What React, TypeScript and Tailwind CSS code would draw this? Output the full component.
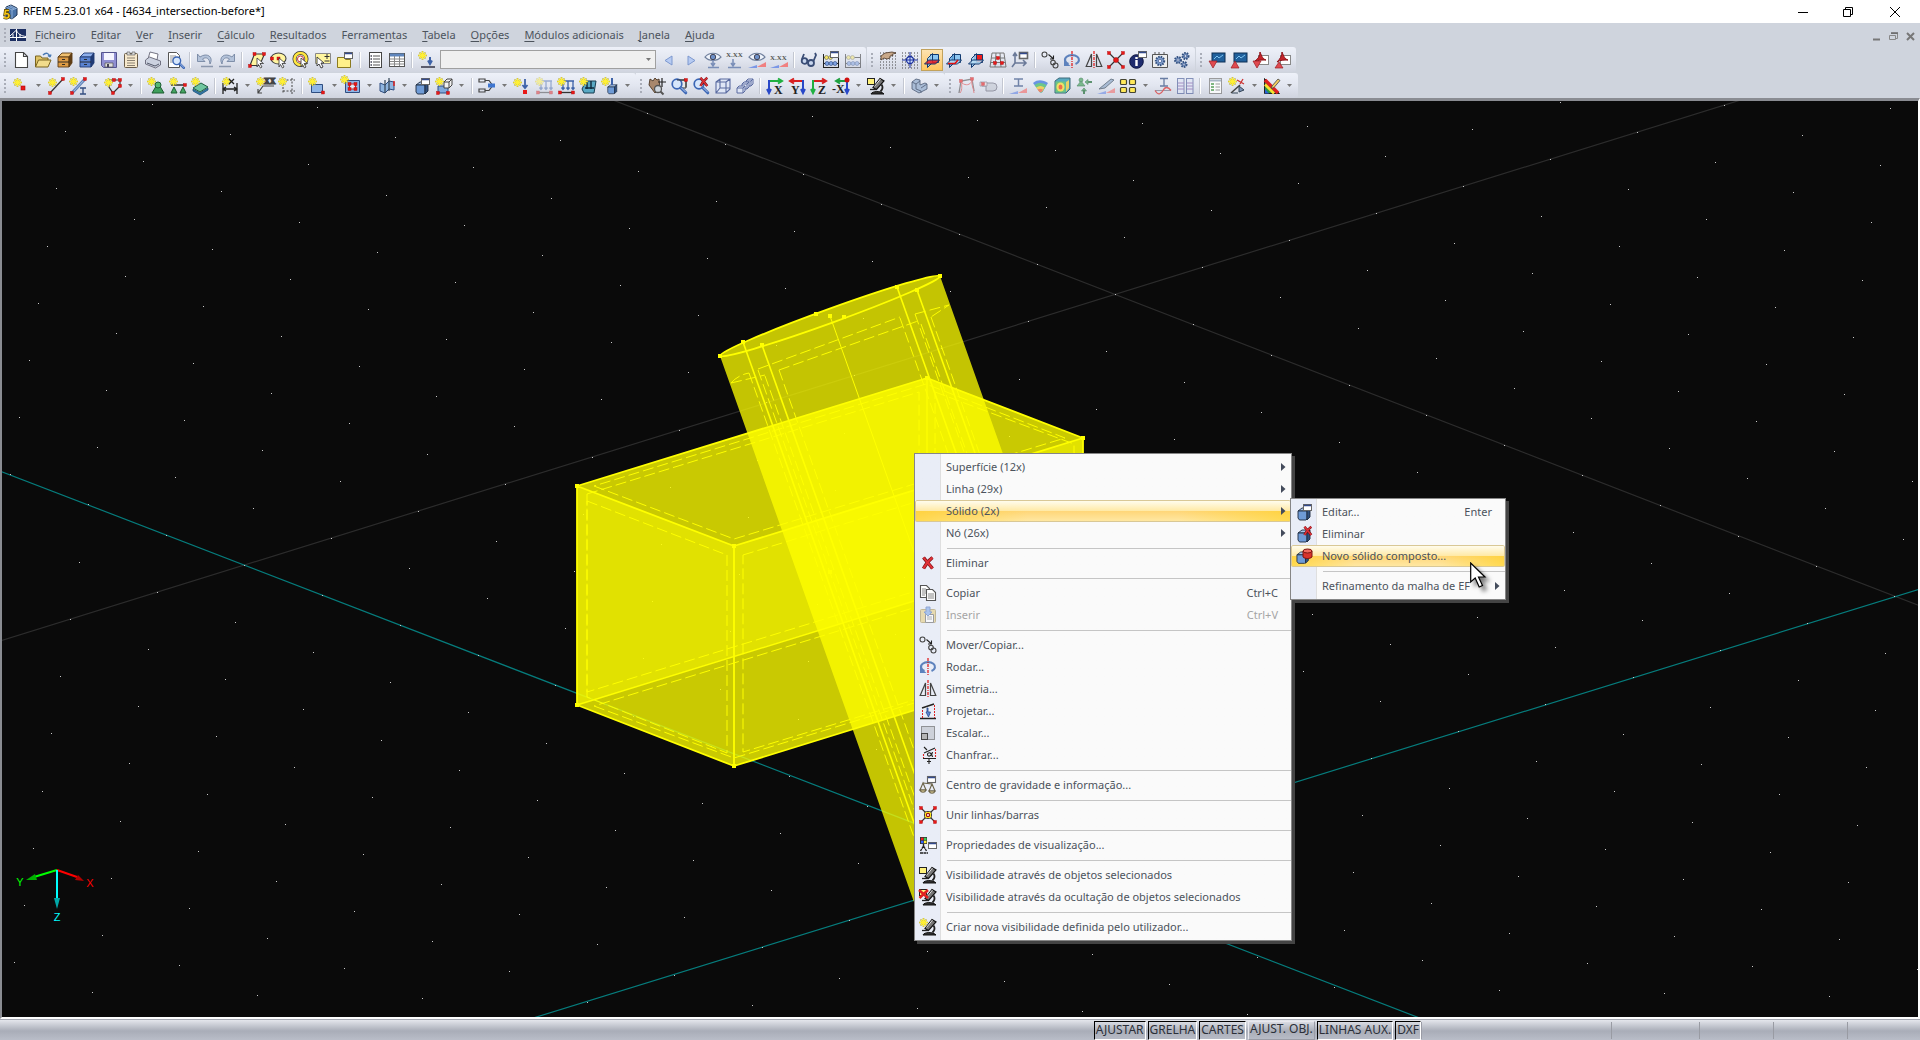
import React from "react";

type Kids = { children?: React.ReactNode };

/* ---------- small drawing parts shared by icons ---------- */
const Star = ({ x = 0, y = 0 }: { x?: number; y?: number }) => (
  <g transform={`translate(${x} ${y})`}>
    <path d="M4.500 0v9M0 4.500h9M1.500 1.500l6 6M7.500 1.500l-6 6" stroke="#b5ab3a" strokeWidth="1.600" />
    <path d="M4.500 .5v8M.5 4.500h8M2 2l5 5M7 2l-5 5" stroke="#fff035" strokeWidth="1.300" />
  </g>
);
const Dot = ({ x, y, c = "#e81818" }: { x: number; y: number; c?: string }) => (
  <rect x={x - 1.5} y={y - 1.5} width="3" height="3" fill={c} stroke="#b00808" strokeWidth=".4" />
);
const Win = ({ x, y }: { x: number; y: number }) => (
  <g>
    <rect x={x + 0.5} y={y + 0.5} width="8" height="6" fill="#fff" stroke="#666" />
    <path d={`M${x + 1} ${y + 1.5}h7`} stroke="#334a8c" strokeWidth="1.500" />
  </g>
);
const Box3 = ({ x = 0, y = 0 }: { x?: number; y?: number }) => (
  <g transform={`translate(${x} ${y})`} stroke="#1d2b40" strokeWidth=".9" strokeLinejoin="round">
    <path d="M1 4l4-3h8l-3 3z" fill="#a9c4ea" />
    <path d="M1 4h9v8l-1 1H2.500L1 11z" fill="#6f9bd6" />
    <path d="M10 4l3-3v9l-3 3z" fill="#30507f" />
  </g>
);
const Lens = ({ x = 0, y = 0 }: { x?: number; y?: number }) => (
  <g transform={`translate(${x} ${y})`}>
    <circle cx="6" cy="6" r="4.800" fill="#d6e6fb" stroke="#3b66b5" strokeWidth="1.700" />
    <path d="M9.800 9.800l5 5" stroke="#3b66b5" strokeWidth="3" strokeLinecap="round" />
    <path d="M10.500 10l4 4" stroke="#b9d0f4" strokeWidth="1" strokeLinecap="round" />
  </g>
);
const Hand = ({ x = 0, y = 0 }: { x?: number; y?: number }) => (
  <path
    transform={`translate(${x} ${y})`}
    d="M0 4l4-3 7-1 4 1-4 1.500 1 1-3 .5v2l-3 1-3-1-3 2z"
    fill="#c9a98a"
    stroke="#4a3524"
    strokeWidth=".8"
  />
);
const Cabinet = ({ a, b, c }: { a: string; b: string; c: string }) => (
  <g stroke={c} strokeWidth=".9">
    <path d="M2 6l4-4h10l-3 4z" fill={a} />
    <path d="M2 6h11v10H2z" fill={b} />
    <path d="M13 6l3-4v10l-3 4z" fill={c} />
    <path d="M2 11h11M6 8.500h3M6 13.500h3" stroke="#222" />
  </g>
);
const Arc = ({ flip = false }: { flip?: boolean }) => (
  <g transform={flip ? "translate(18 0) scale(-1 1)" : undefined}>
    <path d="M1.500 3v7.500H9L6.500 8C10 5.500 13.500 7 14 13c4-7-3-12-10-7z" fill="#b4c3da" stroke="#7687a3" strokeWidth=".9" />
    <path d="M5 15.500h12" stroke="#8b97ad" strokeWidth="1.500" />
  </g>
);
const GridDots = () => (
  <path d="M1 2h16M1 5h16M1 8h16M1 11h16M1 14h16M1 17h16" stroke="#444" strokeWidth="1" strokeDasharray="1 2" />
);
const Planes = ({ hot }: { hot: number }) => (
  <g strokeWidth="1" stroke="#123a70">
    <path d="M7.500 3.500h8v8h-8z" fill={hot === 2 ? "#f01c1c" : "#8cc6f2"} />
    <path d="M4.500 7.500l5-5v9l-5 5z" fill={hot === 1 ? "#6aaee8" : "#9fd2f5"} fillOpacity=".85" />
    <path d="M1.500 13l4-4h11l-4 4z" fill={hot === 0 ? "#f01c1c" : "#b9def5"} fillOpacity=".85" />
    {hot === 1 && <path d="M3 12.500h7l3-3.500" stroke="#e01010" strokeWidth="1.600" fill="none" />}
  </g>
);
const Mover = () => (
  <g fill="none" stroke="#444" strokeWidth="1.100">
    <circle cx="3.500" cy="3.500" r="2.500" />
    <circle cx="12" cy="11.500" r="2.300" />
    <circle cx="14.500" cy="14.500" r="2.500" />
    <path d="M7.500 3.500l4.500 4M12.500 4.500v3.500H9" stroke="#222" />
  </g>
);
const Rotate = () => (
  <g fill="none">
    <path d="M5.500 13A7 4.800 0 1 1 12.500 13" stroke="#5d82bd" strokeWidth="2.200" />
    <path d="M1 9.500V15h6.500z" fill="#5d82bd" />
    <path d="M9 0v18" stroke="#e01010" strokeWidth="1.200" strokeDasharray="3 1 1 1" />
  </g>
);
const Mirror = () => (
  <g fill="none" stroke="#444" strokeWidth="1.200">
    <path d="M6.500 3v12.500H1.200zM11.500 3v12.500h5.300z" />
    <path d="M9 0v18" stroke="#e01010" strokeWidth="1.200" strokeDasharray="3 1 1 1" />
  </g>
);
const Corners = () => (
  <g>
    <Dot x={2} y={2} />
    <Dot x={16} y={2} />
    <Dot x={2} y={16} />
    <Dot x={16} y={16} />
  </g>
);
const Micro = () => (
  <g>
    <path d="M6 10.500l7-9 4 2.500-7.500 8.500z" fill="#777" stroke="#111" strokeWidth="1.200" />
    <path d="M7.500 9.500l6-7.500" stroke="#ddd" />
    <path d="M14.500 7.500c1.800 2.500 1 5-1 7" fill="none" stroke="#222" strokeWidth="1.800" />
    <path d="M3 12.500h6.500" stroke="#222" strokeWidth="1.300" />
    <path d="M4 17c1-3 10-3.500 13 0z" fill="#333" stroke="#111" />
  </g>
);
const Eye = () => (
  <g>
    <path d="M1 6c4-5 12-5 16 0-4 4.500-12 4.500-16 0z" fill="#eef3fb" stroke="#6f7f9c" strokeWidth="1.200" />
    <circle cx="9" cy="6" r="2.700" fill="#6c8fc8" stroke="#445" />
  </g>
);
const Wedge = ({ y = 12 }: { y?: number }) => (
  <g>
    <path d={`M0 ${y + 4}h9v-3z`} fill="#7b97e6" />
    <path d={`M9 ${y + 3}l9-5v5z`} fill="#f08080" />
  </g>
);
const Txt = ({ x, y, s = 7, c = "#555", children }: { x: number; y: number; s?: number; c?: string } & Kids) => (
  <text x={x} y={y} fontSize={s} fill={c} fontFamily="Liberation Serif, serif" fontWeight="bold">
    {children}
  </text>
);
const Gear = ({ x, y, r }: { x: number; y: number; r: number }) => (
  <g>
    <circle cx={x} cy={y} r={r} fill="#7f9ccb" stroke="#33507f" strokeWidth="2" strokeDasharray="1.500 1" />
    <circle cx={x} cy={y} r={r * 0.4} fill="#eef" stroke="#33507f" strokeWidth=".6" />
  </g>
);
const Loads = () => (
  <g fill="none" stroke="#3d62a8" strokeWidth="1.300">
    <path d="M4 4h13M6 4v8M11 4v8M16 4v8M4.500 10.500l1.500 2 1.500-2M9.500 10.500l1.500 2 1.500-2M14.500 10.500l1.500 2 1.500-2" />
    <path d="M3 15.500h13" stroke="#333" />
  </g>
);
const Axis = ({ a, b, t }: { a: string; b: string; t: string }) => (
  <g fill="none">
    <path d="M3 4h12M12 1.500l4 2.500-4 2.500" stroke={a} strokeWidth="2" />
    <path d="M3 3v12M1 12l2 4 2-4" stroke={b} strokeWidth="2" />
    <Txt x={8} y={17} s={12} c="#222">
      {t}
    </Txt>
  </g>
);
const AxisR = ({ a, b, t }: { a: string; b: string; t: string }) => (
  <g fill="none">
    <path d="M15 4H3M6 1.500L2 4l4 2.500" stroke={a} strokeWidth="2" />
    <path d="M15 3v12M13 12l2 4 2-4" stroke={b} strokeWidth="2" />
    <Txt x={3} y={17} s={12} c="#222">
      {t}
    </Txt>
  </g>
);
const RedX = ({ x = 0, y = 0, s = 1 }: { x?: number; y?: number; s?: number }) => (
  <g transform={`translate(${x} ${y}) scale(${s})`}>
    <path d="M2 1c3 4 6 7 9 11M11 1C7 4 4 8 2 12" stroke="#7d1016" strokeWidth="3.400" fill="none" />
    <path d="M2 1c3 4 6 7 9 11M11 1C7 4 4 8 2 12" stroke="#e03238" strokeWidth="2" fill="none" />
  </g>
);
const Abacus = () => (
  <g>
    <path d="M1.500 3v14M16.500 3v14M1 6.500h16M1 12.500h16M1 16.500h16" stroke="#222" fill="none" />
    <g fill="#7fa2e2" stroke="#24417c" strokeWidth=".6">
      <circle cx="5" cy="12.500" r="2" />
      <circle cx="9" cy="12.500" r="2" />
      <circle cx="13" cy="12.500" r="2" />
    </g>
    <g fill="#f2e36a" stroke="#665" strokeWidth=".6">
      <circle cx="4.500" cy="6.500" r="2" />
      <circle cx="8.500" cy="6.500" r="2" />
    </g>
  </g>
);
const Pointer = () => (
  <path d="M9 7l6.500 5.500H12l2 3.500-1.500 1-2-3.500L9 16z" fill="#fff" stroke="#333" strokeWidth=".8" />
);

const icons: Record<string, React.ReactNode> = {
  new: <path d="M3.500 1.500h8l4 4v11h-12zM11.500 1.500v4h4" fill="#fff" stroke="#444" strokeWidth="1.100" />,
  open: (
    <g stroke="#7a6420">
      <path d="M1.500 16V5h5l1.500 2h6v3" fill="#e0c468" />
      <path d="M1.500 16l3-7h12.500l-3 7z" fill="#f2dc8c" />
      <path d="M9 4c3-3 6-2 7 2m0 0l-2-1.500M16 6l1-2.500" fill="none" stroke="#4a7ab5" strokeWidth="1.400" />
    </g>
  ),
  cabA: <Cabinet a="#f0c070" b="#dd9b45" c="#5f3c14" />,
  cabB: <Cabinet a="#8fb0ec" b="#5a83d0" c="#203a75" />,
  save: (
    <g>
      <path d="M1.500 1.500h15v15h-13l-2-2z" fill="#8f8fd2" stroke="#54548f" />
      <path d="M4 2h10v7H4z" fill="#f4f4ff" />
      <path d="M5 12h8v4H5z" fill="#ddd" stroke="#555" strokeWidth=".7" />
      <path d="M7 13h2v3H7z" fill="#445" />
    </g>
  ),
  clip: (
    <g>
      <rect x="2.500" y="2.500" width="13" height="14" rx="1" fill="#f7e9cd" stroke="#6a5c48" />
      <path d="M5 7h8M5 9.500h8M5 12h8M5 14.500h8" stroke="#8b8172" />
      <path d="M5 1h3v2h2V1h3v3H5z" fill="#ddd" stroke="#666" strokeWidth=".7" />
    </g>
  ),
  print: (
    <g stroke="#667" strokeWidth=".9">
      <path d="M4 8L6 1l8 2-1 6z" fill="#fff" />
      <path d="M1.500 9l4-3 11 4v4l-5 3-10-4z" fill="#ccd2e0" />
      <path d="M3 12l8 3 4-2" fill="none" stroke="#454b5c" />
    </g>
  ),
  preview: (
    <g>
      <path d="M2.500 1.500h8l3 3v12h-11z" fill="#fff" stroke="#555" />
      <path d="M4 5h6M4 7h5M4 9h5M4 11h5" stroke="#999" />
      <g transform="translate(6 5) scale(.8)">
        <Lens />
      </g>
    </g>
  ),
  undo: <Arc />,
  redo: <Arc flip />,
  selPara: (
    <g>
      <path d="M6.500 3h10l-5 11.500H2z" fill="#fff6a0" stroke="#333" strokeWidth="1.100" />
      <Dot x={6.500} y={3} />
      <Dot x={16} y={3} />
      <Dot x={2} y={15} />
      <Pointer />
    </g>
  ),
  selEll: (
    <g>
      <ellipse cx="8.500" cy="7.500" rx="7.500" ry="5.500" fill="#fff6a0" stroke="#444" strokeWidth="1.100" />
      <Dot x={8.500} y={7.500} />
      <Dot x={2} y={7.500} />
      <Pointer />
    </g>
  ),
  selRing: (
    <g>
      <circle cx="8.500" cy="8" r="6" fill="none" stroke="#333" strokeWidth="4" />
      <circle cx="8.500" cy="8" r="6" fill="none" stroke="#ffe640" strokeWidth="2.600" />
      <circle cx="8.500" cy="8" r="3" fill="#fff" stroke="#c33" />
      <Pointer />
    </g>
  ),
  selBox: (
    <g>
      <path d="M1.500 2.500h15v10h-15z" fill="#fff6a0" stroke="#888" />
      <path d="M10.500 5.500h5M13 3v5M10.500 10h5" stroke="#333" />
      <path d="M3 6l7 6H7l2 4-2 1-2-4-2 2z" fill="#fff" stroke="#333" strokeWidth=".9" />
    </g>
  ),
  selWin: (
    <g>
      <path d="M1.500 6.500h7l1 2h5v8h-13z" fill="#fff08a" stroke="#8b7a20" />
      <Win x={8} y={1} />
    </g>
  ),
  list: (
    <g>
      <rect x="3.500" y="1.500" width="12" height="15" fill="#fff" stroke="#444" />
      <path d="M7 5h7M7 8h7M7 11h7M7 14h7" stroke="#555" />
      <path d="M4.500 5h1.500M4.500 8h1.500M4.500 11h1.500M4.500 14h1.500" stroke="#445" strokeWidth="1.500" />
    </g>
  ),
  table: (
    <g>
      <rect x="1.500" y="2.500" width="15" height="13" fill="#fff" stroke="#555" />
      <path d="M2 4h14" stroke="#5f86bd" strokeWidth="3" />
      <path d="M2 8h14M2 10.500h14M2 13h14M6.500 5v10M11.500 5v10" stroke="#888" />
    </g>
  ),
  starDown: (
    <g>
      <Star />
      <path d="M12 6v6M10 9.500l2 3.500 2-3.500" stroke="#3d62a8" strokeWidth="2" fill="none" />
      <path d="M3 16h14" stroke="#334" strokeWidth="1.500" />
    </g>
  ),
  prev: <path d="M12 5v9L5 9.500z" fill="#b7cbf2" stroke="#7d98cf" />,
  next: <path d="M6 5v9l7-4.500z" fill="#b7cbf2" stroke="#7d98cf" />,
  eyeDown: (
    <g>
      <Eye />
      <path d="M9 9v5M7 12l2 3 2-3M4 16.500h11" stroke="#7a8fb8" strokeWidth="1.500" fill="none" />
    </g>
  ),
  xxDown: (
    <g>
      <Txt x={0} y={6}>X.XX</Txt>
      <path d="M7 8v6M5 12l2 3 2-3M2 16.500h13" stroke="#7a8fb8" strokeWidth="1.500" fill="none" />
    </g>
  ),
  eyeDiag: (
    <g>
      <Wedge y={13} />
      <Eye />
    </g>
  ),
  xxDiag: (
    <g>
      <Txt x={0} y={9}>X.XX</Txt>
      <Wedge y={13} />
    </g>
  ),
  glasses: (
    <g fill="#c8d6ee" stroke="#3a4d76" strokeWidth="1.800">
      <circle cx="4.500" cy="10" r="2.800" />
      <circle cx="11" cy="12" r="3" />
      <path d="M2 8L4 3M13.500 10L16 4l-1-2" fill="none" />
    </g>
  ),
  abacusWin: (
    <g>
      <Abacus />
      <Win x={8} y={0} />
    </g>
  ),
  abacus: (
    <g opacity=".5">
      <Abacus />
    </g>
  ),
  gridHand: (
    <g>
      <GridDots />
      <Hand x={2} y={1} />
    </g>
  ),
  gridTarget: (
    <g>
      <GridDots />
      <circle cx="9" cy="9" r="3.500" fill="#cfe0ff" stroke="#1b2f9c" strokeWidth="1.300" />
      <path d="M9 1v16M1 9h16" stroke="#1b2f9c" />
    </g>
  ),
  planeA: <Planes hot={0} />,
  planeB: <Planes hot={1} />,
  planeC: <Planes hot={2} />,
  gridPersp: (
    <g fill="none" stroke="#777">
      <path d="M3 2h12l2 14H1zM2 7h14M1.500 11.500h15M7 2L6 16M11 2l1 14" />
      <Dot x={9} y={7} />
      <Dot x={6} y={12} />
      <Dot x={13} y={12} />
    </g>
  ),
  coordWin: (
    <g fill="none" stroke="#6b7a99" strokeWidth="1.600">
      <path d="M4 12V3M4 12l-3 4M4 12h10M12 9l3 3-3 3M2 5l2-3 2 3" />
      <Win x={8} y={1} />
    </g>
  ),
  mover: <Mover />,
  rotate: <Rotate />,
  mirror: <Mirror />,
  joinRed: (
    <g>
      <path d="M2 2l14 14M16 2L2 16" stroke="#333" strokeWidth="1.200" />
      <Corners />
      <circle cx="9" cy="9" r="2.500" fill="#e81818" stroke="#900" strokeWidth=".5" />
    </g>
  ),
  join: (
    <g>
      <path d="M2 2l14 14M16 2L2 16" stroke="#333" strokeWidth="1.100" />
      <rect x="5.500" y="5.500" width="7" height="7" rx="2" fill="#ffee20" stroke="#444" />
      <circle cx="9" cy="9" r="1.600" fill="#fff" stroke="#a01010" strokeWidth="1.200" />
      <Corners />
    </g>
  ),
  info: (
    <g>
      <circle cx="7.500" cy="10.500" r="6.800" fill="#1f2c6e" stroke="#0a1240" />
      <path d="M7.500 9v6M7.500 6v2" stroke="#fff" strokeWidth="2.400" />
      <Win x={9} y={0} />
    </g>
  ),
  gearWin: (
    <g>
      <path d="M1.500 3.500h15v13h-15zM4 1v3M8 1v3M13 1v3" fill="#eee" stroke="#555" />
      <Gear x={9} y={10} r={4.200} />
    </g>
  ),
  gears: (
    <g>
      <Gear x={5} y={9} r={3} />
      <Gear x={12.500} y={5} r={3} />
      <Gear x={11} y={13.500} r={2.500} />
    </g>
  ),
  pcbDown: (
    <g>
      <rect x="4" y="2" width="13" height="9" fill="#20609c" stroke="#0c2f55" />
      <path d="M6 8l3-3 2 2 4-3" stroke="#7ec3f0" fill="none" />
      <path d="M1 10h8l-4 7z" fill="#e04a50" stroke="#9c1c22" strokeWidth=".7" />
    </g>
  ),
  pcbUp: (
    <g>
      <rect x="4" y="2" width="13" height="9" fill="#20609c" stroke="#0c2f55" />
      <path d="M6 8l3-3 2 2 4-3" stroke="#7ec3f0" fill="none" />
      <path d="M1 17h8l-4-7z" fill="#e04a50" stroke="#9c1c22" strokeWidth=".7" />
    </g>
  ),
  pdfDown: (
    <g>
      <rect x="6.500" y="4.500" width="10" height="9" fill="#fff" stroke="#888" />
      <path d="M3 10C6 8 8 5 8 1c2 5 3 7 6 8-4 0-8 0-11 1z" fill="#c4232b" stroke="#8d1218" />
      <path d="M1 10h8l-4 7z" fill="#e04a50" stroke="#9c1c22" strokeWidth=".7" />
    </g>
  ),
  pdfUp: (
    <g>
      <rect x="6.500" y="4.500" width="10" height="9" fill="#fff" stroke="#888" />
      <path d="M3 11C6 8 8 5 8 1c2 5 3 7 6 8-4 0-8 0-11 2z" fill="#c4232b" stroke="#8d1218" />
      <path d="M1 17h8l-4-6z" fill="#e04a50" stroke="#9c1c22" strokeWidth=".7" />
    </g>
  ),
  node: (
    <g>
      <Star x={1} y={1} />
      <rect x="9" y="9" width="4" height="4" fill="#e81818" stroke="#b00808" strokeWidth=".6" />
    </g>
  ),
  line: (
    <g>
      <path d="M3 16L16 2" stroke="#333" strokeWidth="1.200" />
      <Star x={1} y={1} />
      <Dot x={3} y={16} />
      <Dot x={16} y={2} />
    </g>
  ),
  lineI: (
    <g>
      <path d="M3 16L16 2" stroke="#5f82b8" strokeWidth="3" />
      <path d="M3 16L16 2" stroke="#a9c2e6" strokeWidth="1" />
      <Star x={0} y={0} />
      <Dot x={3} y={16} />
      <Dot x={16} y={2} />
      <path d="M11 11h6M11 17h6M14 11v6" stroke="#334d80" strokeWidth="1.300" />
    </g>
  ),
  poly: (
    <g>
      <path d="M5 10V3h11v6l-7 7z" fill="none" stroke="#333" strokeWidth="1.200" />
      <Star x={0} y={1} />
      <Dot x={10} y={3} />
      <Dot x={16} y={3} />
      <Dot x={16} y={9} />
      <Dot x={9} y={16} />
    </g>
  ),
  sup1: (
    <g>
      <path d="M11 6l6 10H5z" fill="#3f9f5c" stroke="#1d5c31" />
      <circle cx="11" cy="8" r="3" fill="#57b873" stroke="#1d5c31" />
      <Star />
    </g>
  ),
  sup2: (
    <g>
      <path d="M2 8h15" stroke="#222" strokeWidth="1.400" />
      <path d="M5 10l3 6H2zM14 10l3 6h-6z" fill="#45a563" stroke="#1d5c31" />
      <Dot x={16} y={8} />
      <Star />
    </g>
  ),
  sup3: (
    <g>
      <path d="M2 12l7 4 8-5v2l-8 5-7-4z" fill="#2e7cb0" stroke="#174565" strokeWidth=".7" />
      <path d="M2 11l7 4 8-5-7-4z" fill="#6fc6a0" stroke="#1d5c41" />
      <Star />
    </g>
  ),
  dim: (
    <g fill="none" stroke="#222" strokeWidth="1.300">
      <path d="M2 6v11M16 6v11M2 12h14M5 10l-3 2 3 2M13 10l3 2-3 2" />
      <Star x={1} y={0} />
      <path d="M8 2l5 5M13 2L8 7" />
    </g>
  ),
  xx: (
    <g fill="none" stroke="#444" strokeWidth="1.200">
      <path d="M2 16l5-7h11M2 12v4h4" />
      <Star />
      <Txt x={8} y={7} s={8}>XX</Txt>
    </g>
  ),
  dash: (
    <g fill="none">
      <path d="M5 3h12M5 14h12M5 3v14M14 1v16" stroke="#444" strokeDasharray="2 1.500" />
      <Star />
    </g>
  ),
  surf: (
    <g>
      <path d="M3.500 7.500h11v8h-11z" fill="#8fb5e6" stroke="#2e4d80" />
      <Star />
      <Dot x={15} y={15.500} />
    </g>
  ),
  opening: (
    <g>
      <path d="M2.500 3.500h14v12h-14z" fill="#8fb5e6" stroke="#2e4d80" />
      <path d="M6.500 7h6v5h-6z" fill="#dfeaf8" stroke="#c22" />
      <Dot x={6.500} y={7} />
      <Dot x={12.500} y={7} />
      <Dot x={6.500} y={12} />
      <Dot x={12.500} y={12} />
      <Star x={-3} y={-2} />
    </g>
  ),
  curtain: (
    <g>
      <path d="M2 6l5 2 4-4 5 1v8l-5-1-4 4-5-2z" fill="#8fb5e0" stroke="#2e4d80" />
      <path d="M7 3v13M11 1v13" stroke="#345" strokeWidth="1.200" />
      <path d="M16 4v5" stroke="#d22" strokeWidth="1.500" />
    </g>
  ),
  solid: (
    <g>
      <Box3 x={2} y={4} />
      <Win x={8} y={1} />
    </g>
  ),
  solidCopy: (
    <g>
      <path d="M3 9h10v7H3z" fill="#7fa8dc" stroke="#2e4d80" />
      <path d="M9 5l3-3h5v6l-3 3H9zM9 5h5v6M14 5l3-3" fill="#f1f1f1" stroke="#444" />
      <Star />
      <Dot x={3} y={16} />
      <Dot x={13} y={16} />
    </g>
  ),
  conn: (
    <g fill="none" stroke="#444" strokeWidth="1.200">
      <path d="M1 2h6v3H1zM1 12h6v3H1zM7 3.500h4l3 4M7 13.500h4l3-4" />
      <path d="M10 8.500h7" stroke="#3f76d0" strokeWidth="4" />
    </g>
  ),
  load1: (
    <g>
      <Star x={0} y={1} />
      <path d="M12 2v8M9.500 8l2.500 3 2.500-3" stroke="#3d62a8" strokeWidth="1.800" fill="none" />
      <rect x="10" y="13" width="4" height="4" fill="#e81818" />
    </g>
  ),
  load2: (
    <g opacity=".45">
      <Loads />
      <Star />
      <Dot x={3} y={15.500} />
      <Dot x={16} y={15.500} />
    </g>
  ),
  load3: (
    <g>
      <Loads />
      <Star />
      <Dot x={3} y={15.500} />
      <Dot x={16} y={15.500} />
    </g>
  ),
  load4: (
    <g>
      <path d="M3 12l4-8h10l-2 12H5z" fill="#5aa9c4" stroke="#173c50" />
      <path d="M8 4v8M12 4v8M6 11h9" stroke="#10283a" strokeWidth="1.400" />
      <Star />
    </g>
  ),
  load5: (
    <g>
      <g transform="translate(6 7) scale(.75)">
        <Box3 />
      </g>
      <path d="M11 1v7" stroke="#3d62a8" strokeWidth="2" />
      <Star />
    </g>
  ),
  pan: (
    <g>
      <path d="M1 8l1-6 3 2 2-3 2 2 2-1 1 9-5 5z" fill="#a8876c" stroke="#4a3524" strokeWidth=".9" />
      <circle cx="10" cy="12" r="3.500" fill="#cfd6de" stroke="#555" strokeWidth="1.300" />
      <path d="M12.500 14.500l3 3" stroke="#555" strokeWidth="2" />
      <path d="M14 1v9M10 5h8" stroke="#222" strokeWidth="1.200" />
    </g>
  ),
  zoomWin: (
    <g>
      <path d="M7 3h9v8H7z" fill="#e8e8e8" stroke="#333" />
      <Lens x={1} y={1} />
      <path d="M7 3h9v7" fill="none" stroke="#333" />
      <Dot x={16} y={3} />
    </g>
  ),
  zoomX: (
    <g>
      <Lens x={1} y={1} />
      <RedX x={7} y={0} s={0.75} />
    </g>
  ),
  cube: (
    <path
      d="M2 5l4-3h10v10l-4 4H2zM2 5h10v11M12 5l4-3M6 2v9h10M6 11l-4 5"
      fill="#dfe6f5"
      stroke="#5a6ba0"
      strokeWidth="1.100"
    />
  ),
  cubes: (
    <g fill="#dfe6f5" stroke="#5a6ba0">
      <path d="M10 4l2-2h5v5l-2 2h-5zM10 4h5v5M15 4l2-2" />
      <path d="M6 7l2-2h5v5l-2 2H6zM6 7h5v5M11 7l2-2" />
      <path d="M1 11l2-2h6v5l-2 2H1zM1 11h6v5M7 11l2-2" />
    </g>
  ),
  vx: <Axis a="#20b040" b="#2848c8" t="X" />,
  vy: <AxisR a="#d82020" b="#2848c8" t="Y" />,
  vz: <Axis a="#d82020" b="#20b040" t="Z" />,
  vmx: (
    <g fill="none">
      <path d="M15 4H5M8 1.500L4 4l4 2.500" stroke="#20a040" strokeWidth="2" />
      <path d="M15 3v12M13 12l2 4 2-4" stroke="#2848c8" strokeWidth="2" />
      <circle cx="15" cy="3" r="2.500" fill="#d01010" />
      <Txt x={0} y={16} s={12} c="#222">-X</Txt>
    </g>
  ),
  microYellow: (
    <g>
      <Micro />
      <rect x=".5" y="1.500" width="7" height="6" fill="#fff27a" stroke="#222" />
    </g>
  ),
  microX: (
    <g>
      <Micro />
      <rect x=".5" y="1.500" width="7" height="6" fill="#fff27a" stroke="#222" />
      <path d="M0 2l9 8M9 2l-8.500 8" stroke="#e02020" strokeWidth="2.500" />
    </g>
  ),
  microStar: (
    <g>
      <Micro />
      <Star />
    </g>
  ),
  ell: (
    <g stroke="#5a6880" strokeWidth=".9">
      <path d="M2 5l4-3 4 1v5l5-2 2 1v5l-8 4-7-4z" fill="#a9bcd6" />
      <path d="M2 5l4 2v5l5 2v2M6 7l4-3M11 11l6-4" fill="none" />
    </g>
  ),
  frame: (
    <g fill="none" opacity=".6">
      <path d="M2 16L4 4l11-2 2 12" stroke="#555" strokeWidth="1.300" />
      <path d="M3 16c3-4 1-8 2-10 4 3 8 2 10-2-1 4 2 8 2 12" stroke="#e05050" />
      <Dot x={4} y={4} />
      <Dot x={15} y={2} />
    </g>
  ),
  roll: (
    <g opacity=".6">
      <path d="M5 6h9a3 3 0 010 8H7V9H3z" fill="#c3c8d2" stroke="#667" />
      <path d="M1 5h7v4H1z" fill="#edd" stroke="#667" strokeWidth=".8" />
      <Dot x={4} y={7} />
    </g>
  ),
  beam: (
    <g opacity=".75">
      <path d="M5 2h9M5 9h9M9.500 2v7" stroke="#4a6290" strokeWidth="1.500" />
      <Wedge y={13} />
    </g>
  ),
  rainbow: (
    <g opacity=".8">
      <path d="M2 6c5-4 10-3 15 0l-5 8c-1 2-3 2-4 0z" fill="#4a80e0" />
      <path d="M3.500 8c4-3 8-2.500 12 0l-3.500 6c-1 2-3 2-4 0z" fill="#50c070" />
      <path d="M5 10.500c3-2 6-2 8.500 0L11.500 14c-1 1.500-2.500 1.500-3.500 0z" fill="#f0d040" />
      <path d="M6.500 12.500c2-1 4-1 5.500 0l-1 2c-1 1-2 1-3 0z" fill="#f07050" />
    </g>
  ),
  heatCube: (
    <g opacity=".85">
      <path d="M2 4l4-3h11v11l-4 4H2z" fill="#3f9fb8" stroke="#256" />
      <rect x="2.500" y="4.500" width="10" height="11" fill="#58c070" />
      <ellipse cx="7.500" cy="10" rx="4" ry="4.500" fill="#f4e050" />
      <ellipse cx="7.500" cy="10" rx="2" ry="2.500" fill="#f05a30" />
      <path d="M13 5l3-2v8l-3 4z" fill="#e8d050" />
    </g>
  ),
  reaction: (
    <g fill="#5fae74" stroke="#3d7d50" strokeWidth=".7" opacity=".8">
      <circle cx="6" cy="3" r="2" />
      <path d="M6 4l4 5H2zM9 11l2.500 3h-5zM10 5l3-2.500v5z" />
      <path d="M9 13v4M13 5h4" strokeWidth="2" />
    </g>
  ),
  blade: (
    <g opacity=".7">
      <path d="M2 12L14 2l3 1-9 8z" fill="#8fa8c8" stroke="#456" />
      <Wedge y={13} />
    </g>
  ),
  quad: (
    <g fill="#ffe95a" stroke="#443" strokeWidth="1.200">
      <rect x="1.500" y="2.500" width="6" height="5" rx="1" />
      <rect x="10.500" y="2.500" width="6" height="5" rx="1" />
      <rect x="1.500" y="10.500" width="6" height="5" rx="1" />
      <rect x="10.500" y="10.500" width="6" height="5" rx="1" />
    </g>
  ),
  sine: (
    <g opacity=".8" fill="none">
      <path d="M6 1.500h8M6 9h8M10 2v7" stroke="#4a6290" strokeWidth="1.300" />
      <path d="M1 13.500h16" stroke="#889" />
      <path d="M1 13.500c3 5 6 4 8 0s5-4 8 0" stroke="#d44" strokeWidth="1.300" />
    </g>
  ),
  cols: (
    <g opacity=".7" fill="#dfe5f5" stroke="#5a6ba0">
      <rect x="1.500" y="1.500" width="6.500" height="15" />
      <rect x="10.500" y="1.500" width="6.500" height="15" />
      <path d="M2 6h6M2 9h6M2 12h6M11 6h6M11 9h6M11 12h6" stroke="#8a6bb0" />
    </g>
  ),
  report: (
    <g opacity=".8">
      <rect x="3.500" y="1.500" width="12" height="15" fill="#fff" stroke="#888" />
      <path d="M4 3.500h11" stroke="#9ab" strokeWidth="2" />
      <path d="M5 7h3M5 10h3M5 13h3" stroke="#6a6" strokeWidth="2" />
      <path d="M9.500 7H14M9.500 10H14M9.500 13H14" stroke="#888" />
    </g>
  ),
  brush: (
    <g>
      <path d="M3 16l9-8" stroke="#444" strokeWidth="1.500" />
      <path d="M4 16h6M11 9l5 4-5 2z" fill="#7c93b8" stroke="#345" />
      <path d="M9 3l7 4M15 2l-3 5" stroke="#c33" strokeWidth="1.300" />
      <Star />
    </g>
  ),
  palette: (
    <g>
      <path d="M1.500 1.500v15h15z" fill="#2f9c3f" stroke="#222" />
      <path d="M2 12l4 4.500H2z" fill="#2a62d8" />
      <path d="M2 3l13 13" stroke="#e02020" strokeWidth="3.500" />
      <path d="M2 7.500l9 9" stroke="#ffe030" strokeWidth="2.600" />
      <path d="M9 9l6-7 2 1.500-6 7-2.500 1z" fill="#f3cf60" stroke="#444" strokeWidth=".8" />
    </g>
  ),
  delete: <RedX x={2.500} y={2.500} />,
  copy: (
    <g fill="#fff" stroke="#555" strokeWidth="1.100">
      <path d="M1.500 1.500h6l3 3v9h-9z" />
      <path d="M3 5h4M3 7h4M3 9h4M3 11h3" stroke="#888" />
      <path d="M7.500 5.500h6l3 3v8h-9z" />
      <path d="M9 10h6M9 12h6M9 14h6" stroke="#888" />
    </g>
  ),
  paste: (
    <g opacity=".6">
      <rect x="1.500" y="3.500" width="15" height="13" rx="1" fill="#e6cf84" stroke="#a8955a" />
      <path d="M6.500 8.500h8v8h-8z" fill="#fff" stroke="#666" />
      <path d="M8 11h5M8 13h5" stroke="#888" />
      <path d="M7 1h4v5h2l-4 4-4-4h2z" fill="#7fa8e8" stroke="#5577bb" />
    </g>
  ),
  project: (
    <g fill="none">
      <path d="M3 6l12-4M1 16.500h16" stroke="#222" strokeWidth="1.400" />
      <path d="M3.500 8v8M15.500 3v13" stroke="#d22" strokeDasharray="2 1" />
      <path d="M9 6v4h2.500L9.500 15 7 10h1V6z" stroke="#2b4c90" strokeWidth=".8" fill="#5d86d0" />
    </g>
  ),
  scale: (
    <g>
      <rect x="2.500" y="2.500" width="13" height="13" fill="#cdd1da" stroke="#444" strokeDasharray="1 1" />
      <rect x="2.500" y="9.500" width="6" height="6" fill="#b5b5b5" stroke="#444" />
    </g>
  ),
  chamfer: (
    <g fill="none" stroke="#222" strokeWidth="1.100">
      <path d="M5 7l11-5M5 1l3 3M4 12.500h13M10 12v6M8 15.500h4" />
      <path d="M4.500 8v4M16.500 3v9" stroke="#d22" strokeDasharray="2 1" />
      <path d="M13.500 6c-1 5-5 5-5 2.500s4-3 5 2.500" />
    </g>
  ),
  gravity: (
    <g fill="none" stroke="#6a6248" strokeWidth="1.100">
      <path d="M4 7l-3 7h6zM13 8l-3 7h6z" />
      <path d="M1 14h6c-1 3-5 3-6 0zM10 15h6c-1 3-5 3-6 0z" fill="#e2d49a" />
      <path d="M4 7l9 1" />
      <Win x={8} y={0} />
    </g>
  ),
  display: (
    <g>
      <rect x="1" y="1" width="7" height="7" fill="#333" />
      <path d="M2 3h2.500" stroke="#e22" strokeWidth="2.500" />
      <path d="M5 3h2.500" stroke="#3c5" strokeWidth="2.500" />
      <path d="M2 6h2.500" stroke="#36f" strokeWidth="2.500" />
      <path d="M5 6h2.500" stroke="#fe3" strokeWidth="2.500" />
      <path d="M4.500 8v4M4.500 10l-3 5M4.500 10l3 5M1 17h8" stroke="#222" strokeWidth="1.400" strokeDasharray="3 .5" />
      <Win x={9} y={6} />
    </g>
  ),
  solidX: (
    <g>
      <Box3 x={2} y={4} />
      <RedX x={8} y={1} s={0.75} />
    </g>
  ),
  composite: (
    <g>
      <g transform="translate(1 4) scale(.95)">
        <Box3 />
      </g>
      <path d="M8 4v6c2 2 7 2 9 0V4z" fill="#d8342c" stroke="#7a1410" />
      <ellipse cx="12.500" cy="4" rx="4.500" ry="2" fill="#f0685c" stroke="#7a1410" />
    </g>
  ),
};

const Icon = ({ name }: { name: string }) => (
  <svg width="18" height="18" viewBox="0 0 18 18" fill="none" aria-hidden="true" className="shrink-0 overflow-visible">
    {icons[name]}
  </svg>
);

/* ---------- toolbars ---------- */
const Caret = () => (
  <svg width="5" height="3" viewBox="0 0 5 3" aria-hidden="true">
    <path d="M0 0h5L2.500 3z" fill="#777" />
  </svg>
);

const Grip = () => (
  <span className="flex w-[10px] shrink-0 flex-col items-center gap-[2px]">
    {[0, 1, 2, 3].map((i) => (
      <i key={i} className="size-[2px] bg-[#a9adb8]" />
    ))}
  </span>
);

const Tools = ({ items }: { items: string }) => (
  <>
    {items.split(" ").map((n, i) => {
      if (n === "|")
        return (
          <span key={i} className="flex w-2 shrink-0 justify-center">
            <i className="h-4 w-px bg-[#c3c7d1]" />
            <i className="h-4 w-px bg-white" />
          </span>
        );
      if (n === "v")
        return (
          <button key={i} aria-label="Mais opções" className="flex h-[22px] w-[13px] shrink-0 items-center justify-center">
            <Caret />
          </button>
        );
      return (
        <button
          key={i}
          aria-label={n}
          className={
            n === "planeA"
              ? "flex size-[22px] shrink-0 items-center justify-center border border-[#c2a25c] bg-linear-to-b from-[#fde3b0] to-[#ffc65c]"
              : "flex size-[22px] shrink-0 items-center justify-center"
          }
        >
          <Icon name={n} />
        </button>
      );
    })}
  </>
);

const Group = ({ children }: Kids) => (
  <div className="flex h-[25px] items-center rounded-r-[3px] bg-linear-to-b from-[#eef1f9] via-[#e2e6f0] to-[#d0d4df] pr-[2px]">
    <Grip />
    {children}
  </div>
);

/* ---------- menu bar ---------- */
const mainMenu: [string, string, string][] = [
  ["", "F", "icheiro"],
  ["E", "d", "itar"],
  ["", "V", "er"],
  ["", "I", "nserir"],
  ["", "C", "álculo"],
  ["", "R", "esultados"],
  ["Ferrame", "n", "tas"],
  ["", "T", "abela"],
  ["", "O", "pções"],
  ["", "M", "ódulos adicionais"],
  ["", "J", "anela"],
  ["", "A", "juda"],
];

/* ---------- context menus ---------- */
type Entry = { t: string; icon?: string; key?: string; sub?: boolean; hot?: boolean; off?: boolean } | null;

const contextEntries: Entry[] = [
  { t: "Superfície (12x)", sub: true },
  { t: "Linha (29x)", sub: true },
  { t: "Sólido (2x)", sub: true, hot: true },
  { t: "Nó (26x)", sub: true },
  null,
  { t: "Eliminar", icon: "delete" },
  null,
  { t: "Copiar", icon: "copy", key: "Ctrl+C" },
  { t: "Inserir", icon: "paste", key: "Ctrl+V", off: true },
  null,
  { t: "Mover/Copiar...", icon: "mover" },
  { t: "Rodar...", icon: "rotate" },
  { t: "Simetria...", icon: "mirror" },
  { t: "Projetar...", icon: "project" },
  { t: "Escalar...", icon: "scale" },
  { t: "Chanfrar...", icon: "chamfer" },
  null,
  { t: "Centro de gravidade e informação...", icon: "gravity" },
  null,
  { t: "Unir linhas/barras", icon: "join" },
  null,
  { t: "Propriedades de visualização...", icon: "display" },
  null,
  { t: "Visibilidade através de objetos selecionados", icon: "microYellow" },
  { t: "Visibilidade através da ocultação de objetos selecionados", icon: "microX" },
  null,
  { t: "Criar nova visibilidade definida pelo utilizador...", icon: "microStar" },
];

const solidEntries: Entry[] = [
  { t: "Editar...", icon: "solid", key: "Enter" },
  { t: "Eliminar", icon: "solidX" },
  { t: "Novo sólido composto...", icon: "composite", hot: true },
  null,
  { t: "Refinamento da malha de EF", sub: true },
];

const Menu = ({ entries, label }: { entries: Entry[]; label: string }) => (
  <div
    role="menu"
    aria-label={label}
    className="border border-[#868686] bg-[#fafafa] bg-linear-to-r from-[#e9edf7] from-[25px] via-[#c5c5c5] via-[25px] to-[#fafafa] to-[26px] py-[2px] shadow-[3px_3px_0_#444]"
  >
    {entries.map((e, i) =>
      e === null ? (
        <div key={i} className="flex h-2 items-center pl-8">
          <i className="h-px w-full bg-[#c5c5c5]" />
        </div>
      ) : (
        <button
          key={i}
          role="menuitem"
          disabled={e.off}
          className={
            "flex h-[22px] w-full items-center pr-[5px] text-left text-[11px] " +
            (e.off ? "text-[#a5a5a5] " : "text-[#4c535c] ") +
            (e.hot
              ? "rounded-[2px] shadow-[inset_0_0_0_1px_#d9c896] [background:linear-gradient(90deg,#ffd01a99,transparent_30%,transparent_70%,#ffd01a99)_0_11px_no-repeat,linear-gradient(#fffef4,#ffeaa8_48%,#ffd678_50%,#ffe9a6)]"
              : "")
          }
        >
          <span className="flex w-[25px] shrink-0 justify-center">{e.icon && <Icon name={e.icon} />}</span>
          <span className="flex-1 whitespace-nowrap pl-[6px]">{e.t}</span>
          {e.key && <span className="pr-2">{e.key}</span>}
          {e.sub && (
            <svg width="5" height="8" viewBox="0 0 5 8" aria-hidden="true">
              <path d="M0 0v8l4.500-4z" fill="#444c5c" />
            </svg>
          )}
        </button>
      )
    )}
  </div>
);

/* ---------- 3D model ---------- */
const O = { x: 244.3, y: 565.3 };
const U = { x: 77.9, y: 30.15 };
const V = { x: 87.1, y: -27.05 };
const gridDots: [number, number][] = [];
for (let i = -24; i < 24; i++)
  for (let j = -24; j < 30; j++) {
    const x = Math.floor(O.x + i * U.x + j * V.x);
    const y = Math.floor(O.y + i * U.y + j * V.y);
    if (x > 2 && x < 1918 && y > 101 && y < 1017) gridDots.push([x, y]);
  }

const ribs: [number, number, number][] = [
  [743, 342, 1.6],
  [762, 345, 1.6],
  [897, 287, 1.6],
  [917, 290, 1.6],
  [830, 316, 1],
];
const dashedRibs: [number, number][] = [
  [749, 373],
  [758, 370],
  [765, 376],
  [779, 370],
  [900, 318],
  [915, 314],
  [921, 324],
  [931, 317],
];

const Scene = () => (
  <svg
    className="absolute inset-0 size-full"
    viewBox="2 101 1916 916"
    preserveAspectRatio="xMinYMin slice"
    role="img"
    aria-label="Modelo 3D"
  >
    <g stroke="#2c2c2c" strokeWidth="1.200">
      <path d="M0 641L1760 94M600 95L1920 606" />
    </g>
    <g stroke="#067c7c" strokeWidth="1.200">
      <path d="M0 471L1430 1022M530 1019L1920 589" />
    </g>
    <g fill="#c9c9c9">
      {gridDots.map(([x, y], i) => (
        <rect key={i} x={x} y={y} width="1" height="1" />
      ))}
    </g>

    <g fill="#ffff00">
      <path d="M577 486L734 546 1083 438 927 378z" fillOpacity=".78" />
      <path d="M577 486L734 546 1083 438V658L927 597 577 705z" fillOpacity=".88" />
      <path d="M577 705L927 597 1083 658 734 766z" fillOpacity=".78" />
      <path d="M720 356A117 7 -19.900 0 1 940 276L1134 824Q1040 880 914 902z" fillOpacity=".76" />
    </g>
    <g fill="none" stroke="#ffff00" strokeWidth="1.800" strokeLinejoin="round">
      <path d="M577 486L734 546 1083 438 927 378zM577 486V705L734 766V546M1083 438V658L734 766" />
      <path d="M577 705L927 597 1083 658" strokeWidth="1.400" />
      <path d="M927 378V597" strokeWidth="1.200" />
      <ellipse cx="830" cy="316" rx="117" ry="7" transform="rotate(-19.900 830 316)" />
      {ribs.map(([x, y, w]) => (
        <path key={x} d={`M${x} ${y}l195 548`} strokeWidth={w} />
      ))}
    </g>
    <g fill="none" stroke="#ffff00" strokeDasharray="11 4" strokeWidth="1">
      <path d="M587 501L727 555V753L587 697zM743 555L1075 453V651L743 752zM587 494L919 392V590L587 692z" />
      <path d="M594 486L734 539 1065 438 926 384zM594 706L734 758 1065 657 926 604zM935 392L1074 444V645L935 590z" />
      <path d="M731 383Q738 375 749 373M731 383L765 375M758 369L900 317M779 370L918 321M915 314L949 305L931 317" />
      {dashedRibs.map(([x, y]) => (
        <path key={x} d={`M${x} ${y}l182 512`} />
      ))}
      <path d="M914 872L990 850" />
    </g>
    <g fill="#ffff00">
      {[
        [577, 486], [734, 546], [1083, 438], [927, 378], [577, 705], [734, 766], [720, 356], [940, 276],
        [743, 342], [762, 345], [897, 287], [917, 290], [816, 314], [830, 316], [844, 317], [830, 572],
      ].map(([x, y]) => (
        <rect key={`${x}-${y}`} x={x - 2} y={y - 2} width="4" height="4" />
      ))}
    </g>

    <g fontFamily="Liberation Sans, sans-serif" fontSize="11" textAnchor="middle">
      <path d="M57 870L34 877" stroke="#00ff00" strokeWidth="2" />
      <path d="M26 880l9-6 2 6z" fill="#00b000" />
      <path d="M57 870l20 7" stroke="#ff0000" strokeWidth="2" />
      <path d="M84 881l-6-6-3 5z" fill="#b00000" />
      <path d="M57 870v30" stroke="#00ffff" strokeWidth="2" />
      <path d="M57 909l-3-11h6z" fill="#00a8a8" />
      <text x="20" y="886" fill="#00ff00">Y</text>
      <text x="90" y="887" fill="#ff0000">X</text>
      <text x="57" y="921" fill="#00ffff">Z</text>
    </g>
  </svg>
);

const statusOn = "border border-t-black border-l-black border-r-white border-b-white";
const statusOff = "border border-t-[#e8e8ee] border-l-[#e8e8ee] border-r-[#9a9ca6] border-b-[#9a9ca6] pb-[2px]";
const statusItems: [string, string][] = [
  ["AJUSTAR", statusOn],
  ["GRELHA", statusOn],
  ["CARTES", statusOn],
  ["AJUST. OBJ.", statusOff],
  ["LINHAS AUX.", statusOn],
  ["DXF", statusOn],
];

export default function App() {
  return (
    <div className="flex h-screen w-full flex-col overflow-hidden bg-[#cfd4dd] font-['Noto_Sans',sans-serif]">
      <header className="flex h-[23px] shrink-0 items-center bg-white pl-[2px] text-black">
        <svg width="16" height="16" viewBox="0 0 16 16" aria-hidden="true">
          <path d="M4 3l5-2 6 3v7l-5 4-6-3z" fill="#4a73a8" stroke="#1d3352" />
          <path d="M4 3l6 3v9M10 6l5-2M6 2l6 3M8 1.500l6 3" stroke="#9dbbe0" fill="none" strokeWidth=".8" />
          <path d="M7 6.500H3.500L3 10c2-1 4-.3 4 1.700 0 2.300-3 3-5 1.500" stroke="#4a3a00" strokeWidth="3" fill="none" />
          <path d="M7 6.500H3.500L3 10c2-1 4-.3 4 1.700 0 2.300-3 3-5 1.500" stroke="#f5c518" strokeWidth="1.700" fill="none" />
        </svg>
        <h1 className="flex-1 pl-[5px] text-[11px]">RFEM 5.23.01 x64 - [4634_intersection-before*]</h1>
        <button aria-label="Minimizar" className="flex h-[23px] w-[45px] items-center justify-center">
          <svg width="10" height="10" viewBox="0 0 10 10"><path d="M0 5.500h10" stroke="#000" /></svg>
        </button>
        <button aria-label="Restaurar" className="flex h-[23px] w-[45px] items-center justify-center">
          <svg width="10" height="10" viewBox="0 0 10 10" fill="none" stroke="#000"><path d="M.5 2.500h7v7h-7zM2.500 2.500v-2h7v7h-2" /></svg>
        </button>
        <button aria-label="Fechar" className="flex h-[23px] w-[50px] items-center justify-center">
          <svg width="10" height="10" viewBox="0 0 10 10"><path d="M0 0l10 10M10 0L0 10" stroke="#000" /></svg>
        </button>
      </header>

      <nav className="flex h-6 shrink-0 items-center text-[11px] text-[#4c535c]">
        <Grip />
        <svg width="16" height="12" viewBox="0 0 16 12" aria-hidden="true">
          <path d="M0 0h16v12H0z" fill="#1d2f62" />
          <path d="M0 8.500h16M6.500 0v12M0 7l6.500-6c1 4 5 6 9.500 6.500M3 5v3M10 5v3" stroke="#fff" fill="none" />
        </svg>
        <div className="flex flex-1 gap-[15px] pl-[9px]">
          {mainMenu.map(([a, u, b]) => (
            <button key={u + b} className="whitespace-nowrap">
              {a}
              <u className="underline-offset-2">{u}</u>
              {b}
            </button>
          ))}
        </div>
        <div className="flex gap-2 pt-[3px] pr-[5px]">
          <button aria-label="Minimizar janela">
            <svg width="9" height="9" viewBox="0 0 9 9"><path d="M1 7.500h7" stroke="#777" strokeWidth="2" /></svg>
          </button>
          <button aria-label="Restaurar janela">
            <svg width="9" height="9" viewBox="0 0 9 9" fill="none" stroke="#888"><path d="M.5 3.500h6v4h-6zM2 1.500h6.500v5H7" /><path d="M2 1h7" stroke="#666" strokeWidth="1.500" /></svg>
          </button>
          <button aria-label="Fechar janela">
            <svg width="9" height="9" viewBox="0 0 9 9"><path d="M1 1l7 7M8 1L1 8" stroke="#777" strokeWidth="2" /></svg>
          </button>
        </div>
      </nav>

      <div className="flex shrink-0 flex-col gap-px" role="toolbar" aria-label="Ferramentas">
        <div className="flex gap-px">
          <Group>
            <Tools items="new open cabA cabB save clip print preview | undo redo | selPara selEll selRing selBox selWin | list table | starDown" />
            <label className="relative mx-[2px] flex" aria-label="Caso de carga">
              <select className="h-[19px] w-[216px] appearance-none border border-[#a0a0a0] bg-[#f0f0f0]" />
              <span className="pointer-events-none absolute top-2 right-[5px]">
                <Caret />
              </span>
            </label>
            <Tools items="prev next eyeDown xxDown eyeDiag xxDiag | glasses abacusWin abacus" />
          </Group>
          <Group>
            <Tools items="gridHand gridTarget planeA planeB planeC gridPersp coordWin | mover rotate mirror joinRed info gearWin gears" />
          </Group>
          <Group>
            <Tools items="pcbDown pcbUp pdfDown pdfUp" />
          </Group>
        </div>
        <div className="flex">
          <Group>
            <Tools items="node v line lineI v poly v | sup1 sup2 sup3 | dim v xx dash | surf v opening v curtain v solid solidCopy v | conn v load1 load2 load3 load4 load5 v" />
          </Group>
          <Group>
            <Tools items="pan zoomWin zoomX cube cubes | vx vy vz vmx v microYellow v | ell v" />
          </Group>
          <Group>
            <Tools items="frame roll | beam rainbow heatCube reaction blade quad v sine cols | report brush v palette v" />
          </Group>
        </div>
      </div>

      <main className="relative min-h-0 flex-1 border-2 border-t-[3px] border-[#8a8c92] border-r-white border-b-white bg-[#0a0a0a]">
        <Scene />
        <div className="absolute top-[352px] left-[912px] w-[378px]">
          <Menu entries={contextEntries} label="Objetos selecionados" />
        </div>
        <div className="absolute top-[397px] left-[1288px] w-[216px]">
          <Menu entries={solidEntries} label="Sólido" />
        </div>
        <svg
          className="absolute top-[461px] left-[1468px] drop-shadow-[4px_4px_2px_rgba(0,0,0,0.5)]"
          width="17"
          height="27"
          viewBox="0 0 17 27"
          aria-hidden="true"
        >
          <path d="M.7 1v19l4.500-4 4 9 3.300-1.500-4-8.500H15z" fill="#fff" stroke="#000" strokeWidth="1.200" />
        </svg>
      </main>

      <footer className="flex h-[21px] shrink-0 items-center border-t border-[#a5a8b2] bg-linear-to-b from-[#e4e6ec] via-[#a9adb8] via-55% to-[#b9bdc8]">
        <div className="flex flex-1 justify-end gap-[2px] text-[12px] leading-4 text-[#2b2f38]">
          {statusItems.map(([t, c]) => (
            <button key={t} className={"flex h-[19px] items-center whitespace-nowrap px-px " + c}>
              {t}
            </button>
          ))}
        </div>
        <div className="flex w-[499px] justify-end border-l border-[#9a9ca6]">
          <i className="h-[17px] w-[88px] border-l border-[#999ba3]" />
          <i className="h-[17px] w-[74px] border-l border-[#999ba3]" />
          <i className="h-[17px] w-[74px] border-l border-[#999ba3]" />
          <i className="h-[17px] w-[73px] border-l border-[#999ba3]" />
        </div>
      </footer>
    </div>
  );
}
